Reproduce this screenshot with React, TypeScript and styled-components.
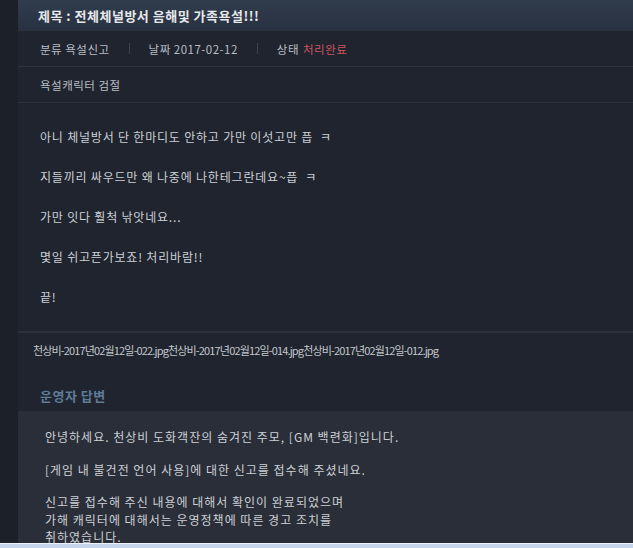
import React from "react";
import styled, { createGlobalStyle } from "styled-components";

const GlobalStyle = createGlobalStyle`
  html, body {
    margin: 0;
    padding: 0;
    background: #1b2029;
  }
  body {
    font-family: "Noto Sans CJK KR", "Noto Sans", sans-serif;
    color: #c9ccd1;
  }
`;

// whole window
const Screen = styled.div`
  width: 633px;
  height: 548px;
  display: flex;
  flex-direction: column;
  overflow: hidden;
  background: #1b2029;
`;

// anything above the bottom window edge
const Viewport = styled.div`
  flex: 1;
  overflow: hidden;
  padding-left: 18px;
`;

const Panel = styled.div`
  background: #1f242e;
  min-height: 100%;
`;

const TitleBar = styled.div`
  height: 31px;
  display: flex;
  align-items: center;
  padding-left: 20px;
  background: linear-gradient(#313c4d, #283140);
`;

const Title = styled.h1`
  margin: 0;
  font-size: 13px;
  font-weight: 700;
  color: #e6e8eb;
  letter-spacing: 0.5px;
`;

// meta rows under the title
const InfoRow = styled.div`
  height: 35px;
  display: flex;
  align-items: center;
  padding-left: 22px;
  font-size: 11.5px;
  letter-spacing: 0.5px;
  color: #b9bdc4;
  border-bottom: 1px solid #2b323d;
`;

const InfoItem = styled.span`
  display: flex;
  align-items: center;
  gap: 4px;
`;

const Divider = styled.span`
  width: 1px;
  height: 11px;
  background: #39414d;
  margin: 0 19px;
`;

const Status = styled.span`
  color: #c9545f;
`;

// report body
const Body = styled.div`
  padding: 24px 0 24px 22px;
  border-bottom: 2px solid #2a313b;
`;

const Para = styled.p`
  margin: 0 0 20px 0;
  font-size: 12px;
  line-height: 20px;
  letter-spacing: 0.8px;
  color: #cdd0d5;
  white-space: pre;
  &:last-child {
    margin-bottom: 0;
  }
`;

const Attach = styled.div`
  padding: 8px 0 0 15px;
  font-size: 11px;
  line-height: 18px;
  color: #c3c7cd;
  letter-spacing: -0.85px;
  white-space: nowrap;
`;

const AnswerTitle = styled.h2`
  margin: 0;
  padding: 27px 0 6px 22px;
  font-size: 13px;
  font-weight: 700;
  letter-spacing: 0.5px;
  color: #5e7c98;
`;

const AnswerBox = styled.div`
  background: #292e38;
  padding: 17px 0 0 27px;
`;

const AnswerPara = styled.p`
  margin: 0 0 15px 0;
  font-size: 12px;
  line-height: 17.5px;
  letter-spacing: 1px;
  color: #cdd0d5;
  white-space: pre;
`;

const WindowEdge = styled.div`
  height: 4px;
  background: #c6d4ec;
  border-top: 1px solid #eef3fb;
`;

const bodyLines = [
  "아니 체널방서 단 한마디도 안하고 가만 이섯고만 픕  ㅋ",
  "지들끼리 싸우드만 왜 나중에 나한테그란데요~픕  ㅋ",
  "가만 잇다 훨척 낚앗네요...",
  "몇일 쉬고픈가보죠! 처리바람!!",
  "끝!",
];

const App = () => {
  return (
    <>
      <GlobalStyle />
      <Screen>
        <Viewport>
          <Panel>
            <TitleBar>
              <Title>제목 : 전체체널방서 음해및 가족욕설!!!</Title>
            </TitleBar>
            <InfoRow>
              <InfoItem>분류 욕설신고</InfoItem>
              <Divider />
              <InfoItem>날짜 2017-02-12</InfoItem>
              <Divider />
              <InfoItem>
                상태 <Status>처리완료</Status>
              </InfoItem>
            </InfoRow>
            <InfoRow>욕설캐릭터 검절</InfoRow>

            <Body>
              {bodyLines.map((line) => (
                <Para key={line}>{line}</Para>
              ))}
            </Body>

            <Attach>
              천상비-2017년02월12일-022.jpg천상비-2017년02월12일-014.jpg천상비-2017년02월12일-012.jpg
            </Attach>

            {/* operator answer */}
            <AnswerTitle>운영자 답변</AnswerTitle>
            <AnswerBox>
              <AnswerPara>안녕하세요. 천상비 도화객잔의 숨겨진 주모, [GM 백련화]입니다.</AnswerPara>
              <AnswerPara>[게임 내 불건전 언어 사용]에 대한 신고를 접수해 주셨네요.</AnswerPara>
              <AnswerPara>
                {"신고를 접수해 주신 내용에 대해서 확인이 완료되었으며\n가해 캐릭터에 대해서는 운영정책에 따른 경고 조치를\n취하였습니다."}
              </AnswerPara>
            </AnswerBox>
          </Panel>
        </Viewport>
        <WindowEdge />
      </Screen>
    </>
  );
};

export default App;
